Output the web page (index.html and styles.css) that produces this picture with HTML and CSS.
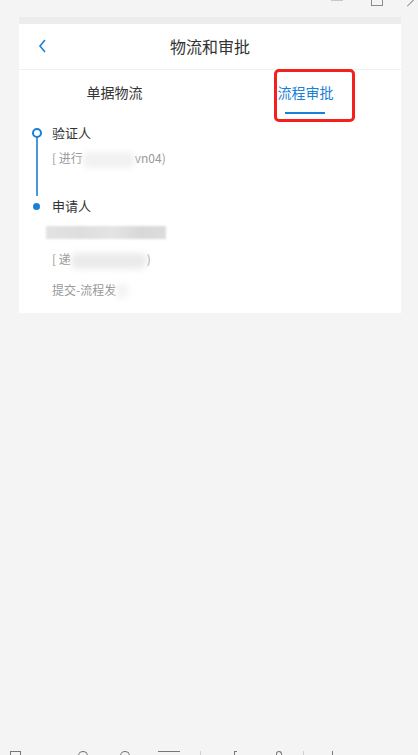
FILE: index.html
```html
<!DOCTYPE html>
<html lang="zh-CN">

<head>
    <meta charset="UTF-8">
    <meta name="viewport" content="width=device-width, initial-scale=1.0">
    <title>物流和审批</title>
    <link rel="stylesheet" href="styles.css">
</head>

<body>
    <div class="winbar">
        <span class="wb-min"></span>
        <span class="wb-max"></span>
        <span class="wb-close"></span>
    </div>

    <div class="card">
        <div class="card-top"></div>
        <div class="header">
            <svg class="back" width="10" height="14" viewBox="0 0 10 14">
                <path d="M7 1 L2 7 L7 13" fill="none" stroke="#1a7fd6" stroke-width="1.6" />
            </svg>
            <div class="title">物流和审批</div>
        </div>

        <div class="tabs">
            <div class="tab">单据物流</div>
            <div class="tab active">流程审批</div>
        </div>

        <div class="timeline">
            <div class="step first">
                <span class="node ring"></span>
                <div class="name">验证人</div>
                <div class="sub">[ 进行<span class="mask m1"></span>vn04)</div>
            </div>
            <div class="step">
                <span class="node dot"></span>
                <div class="name">申请人</div>
                <div class="pix"></div>
                <div class="sub gap1">[ 递<span class="mask m2"></span>)</div>
                <div class="sub gap2">提交-流程发<span class="mask m3"></span></div>
            </div>
        </div>
    </div>

    <div class="taskbar">
        <span class="tb tb1"></span>
        <span class="tb tb2"></span>
        <span class="tb tb3"></span>
        <span class="tb tb4"></span>
        <span class="tb-sep sep1"></span>
        <span class="tb tb5"></span>
        <span class="tb tb6"></span>
        <span class="tb-sep sep2"></span>
        <span class="tb tb7"></span>
    </div>
</body>

</html>
```

FILE: styles.css
```css
body {
    margin: 0;
    width: 418px;
    height: 755px;
    background: #f4f4f4;
    font-family: "Noto Sans CJK SC", "Noto Sans", sans-serif;
    color: #333;
    position: relative;
    overflow: hidden;
}

/* cut-off window controls at the top */
.winbar {
    height: 17px;
    position: relative;
}

.wb-min {
    position: absolute;
    left: 331px;
    top: 0;
    width: 12px;
    height: 1px;
    background: #c8c8c8;
}

.wb-max {
    position: absolute;
    left: 371px;
    top: -6px;
    width: 10px;
    height: 10px;
    border: 1px solid #8a8a8a;
}

.wb-close {
    position: absolute;
    left: 411px;
    top: -4px;
    width: 1px;
    height: 12px;
    background: #8a8a8a;
    transform: rotate(45deg);
}

.card {
    margin: 0 17px 0 19px;
    background: #fff;
    padding-bottom: 14px;
}

.card-top {
    height: 7px;
    background: #ececec;
}

.header {
    height: 45px;
    display: flex;
    align-items: center;
    justify-content: center;
    position: relative;
    border-bottom: 1px solid #f0f0f0;
}

.back {
    position: absolute;
    left: 19px;
    top: 15px;
}

.title {
    font-size: 16px;
    color: #333;
    margin-bottom: 2px;
}

.tabs {
    display: flex;
    height: 52px;
}

.tab {
    flex: 1;
    display: flex;
    align-items: flex-start;
    justify-content: center;
    font-size: 14px;
    line-height: 20px;
    padding-top: 12px;
    color: #333;
    position: relative;
}

.tab.active {
    color: #1a7fd6;
}

.tab.active::after {
    content: "";
    position: absolute;
    left: 75px;
    top: 42px;
    width: 40px;
    height: 2px;
    background: #1a7fd6;
}

/* red highlight box over the active tab */
.tab.active::before {
    content: "";
    position: absolute;
    left: 64px;
    top: -1px;
    width: 75px;
    height: 47px;
    border: 3px solid #f5201c;
    border-radius: 5px;
}

.timeline {
    padding-left: 33px;
}

.step {
    position: relative;
}

.step.first {
    height: 73px;
}

.step.first::before {
    content: "";
    position: absolute;
    left: -16px;
    top: 12px;
    width: 1.5px;
    height: 62px;
    background: #4a98de;
}

.node {
    position: absolute;
    box-sizing: border-box;
    border-radius: 50%;
}

.node.ring {
    left: -20px;
    top: 6px;
    width: 10px;
    height: 10px;
    border: 2.5px solid #1a7fd6;
    background: #fff;
}

.node.dot {
    left: -19px;
    top: 8px;
    width: 7px;
    height: 7px;
    background: #1a7fd6;
}

.name {
    font-size: 13px;
    line-height: 22px;
    color: #333;
}

.sub {
    font-size: 12px;
    line-height: 18px;
    color: #999;
    margin-top: 5px;
    white-space: nowrap;
}

.sub.gap1 {
    margin-top: 11px;
}

.sub.gap2 {
    margin-top: 12px;
}

.mask {
    display: inline-block;
    vertical-align: middle;
    height: 16px;
    background: #f1f1f1;
    filter: blur(3px);
    border-radius: 6px;
}

.m1 {
    width: 52px;
}

.m2 {
    width: 76px;
    background: #ebebeb;
}

.m3 {
    width: 12px;
    background: #f3f3f3;
}

.pix {
    margin: 9px 0 0 -6px;
    width: 120px;
    height: 13px;
    background: linear-gradient(90deg, #e2e2e2 0, #dedede 30%, #e4e4e4 55%, #d8d8d8 80%, #dcdcdc 100%);
    filter: blur(1px);
}

/* cut-off taskbar icons at the bottom */
.taskbar {
    position: absolute;
    left: 0;
    bottom: -4px;
    width: 418px;
    height: 8px;
}

.tb {
    position: absolute;
    top: 0;
    height: 6px;
    border: 1.5px solid #777;
    border-bottom: none;
}

.tb1 { left: 10px; width: 9px; }
.tb2 { left: 78px; width: 8px; border-radius: 5px 5px 0 0; }
.tb3 { left: 120px; width: 8px; border-radius: 5px 5px 0 0; }
.tb4 { left: 158px; width: 22px; border-left: none; border-right: none; }
.tb5 { left: 234px; width: 2px; border-right: none; }
.tb6 { left: 276px; width: 4px; border-radius: 3px 3px 0 0; }
.tb7 { left: 332px; width: 0; border-right: none; }

.tb-sep {
    position: absolute;
    top: 0;
    width: 1px;
    height: 8px;
    background: #d0d0d0;
}

.sep1 { left: 200px; }
.sep2 { left: 303px; }
```
